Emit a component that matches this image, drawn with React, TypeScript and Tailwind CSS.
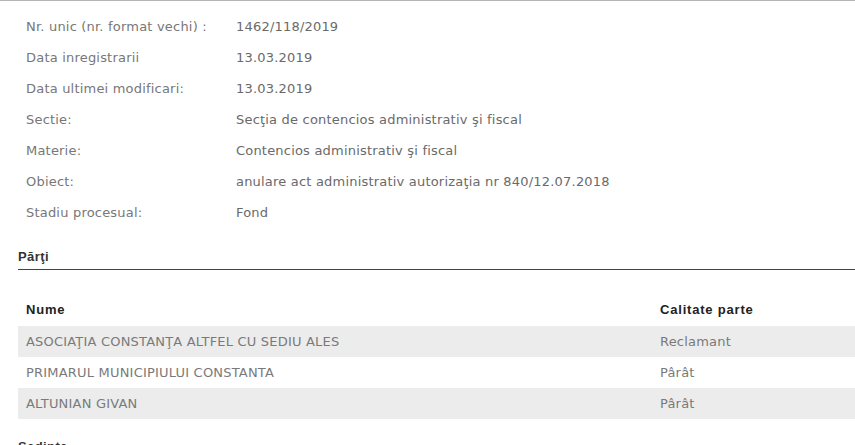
import React from "react";

const info: [string, string][] = [
  ["Nr. unic (nr. format vechi) :", "1462/118/2019"],
  ["Data inregistrarii", "13.03.2019"],
  ["Data ultimei modificari:", "13.03.2019"],
  ["Sectie:", "Secţia de contencios administrativ şi fiscal"],
  ["Materie:", "Contencios administrativ şi fiscal"],
  ["Obiect:", "anulare act administrativ autorizaţia nr 840/12.07.2018"],
  ["Stadiu procesual:", "Fond"],
];

const parti: [string, string][] = [
  ["ASOCIAŢIA CONSTANŢA ALTFEL CU SEDIU ALES", "Reclamant"],
  ["PRIMARUL MUNICIPIULUI CONSTANTA", "Pârât"],
  ["ALTUNIAN GIVAN", "Pârât"],
];

export default function App() {
  return (
    <div className="w-[855px] h-[445px] overflow-hidden bg-white border-t border-[#b5b5b5]">
      <div className="pl-[18px] pt-[10px]">
        <div className="flex flex-col pl-[8px] font-['DejaVu_Sans',sans-serif] text-[13px] tracking-[0.2px] text-[#777]">
          {info.map(([k, v]) => (
            <div key={k} className="flex h-[31px] items-center">
              <div className="w-[210px] shrink-0">{k}</div>
              <div className="text-[#6a6a6a]">{v}</div>
            </div>
          ))}
        </div>
        <div className="mt-[21px] font-['Liberation_Sans',Arial,sans-serif] font-bold text-[13px] tracking-[0.4px] text-[#333] leading-[16px] pb-[4px] border-b-[1.5px] border-[#444]">
          Părţi
        </div>
        <div className="mt-[25px] flex h-[31px] items-start pt-[5px] font-['Liberation_Sans',Arial,sans-serif] font-bold text-[13px] tracking-[0.8px] text-[#222]">
          <div className="w-[642px] pl-[8px]">Nume</div>
          <div>Calitate parte</div>
        </div>
        <div className="font-['DejaVu_Sans',sans-serif] text-[13px] tracking-[0.2px] text-[#7a7a7a]">
          {parti.map(([n, c], i) => (
            <div key={n} className={`flex h-[31px] items-center ${i % 2 === 0 ? "bg-[#ececec]" : "bg-white"}`}>
              <div className="w-[642px] pl-[8px]">{n}</div>
              <div>{c}</div>
            </div>
          ))}
        </div>
        <div className="mt-[18px] font-['Liberation_Sans',Arial,sans-serif] font-bold text-[13px] tracking-[0.4px] text-[#333]">
          Sedinte
        </div>
      </div>
    </div>
  );
}
